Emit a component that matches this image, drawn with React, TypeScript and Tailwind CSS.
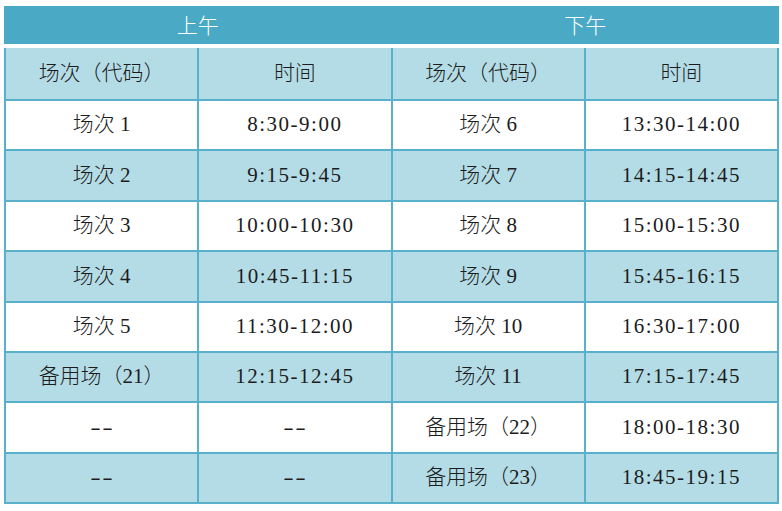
import React from "react";

const rows: [string, string, string, string][] = [
  ["场次 1", "8:30-9:00", "场次 6", "13:30-14:00"],
  ["场次 2", "9:15-9:45", "场次 7", "14:15-14:45"],
  ["场次 3", "10:00-10:30", "场次 8", "15:00-15:30"],
  ["场次 4", "10:45-11:15", "场次 9", "15:45-16:15"],
  ["场次 5", "11:30-12:00", "场次 10", "16:30-17:00"],
  ["备用场（21）", "12:15-12:45", "场次 11", "17:15-17:45"],
  ["--", "--", "备用场（22）", "18:00-18:30"],
  ["--", "--", "备用场（23）", "18:45-19:15"],
];

const font = { fontFamily: '"Liberation Serif", "Noto Sans CJK SC", serif' };

function Cell({ text, bg, time, h }: { text: string; bg: string; time?: boolean; h: string }) {
  const dash = text === "--";
  return (
    <div
      className={`flex items-center justify-center text-[21px] text-[#1c1c1c] font-light ${bg} ${h} ${
        time ? "tracking-[1.5px]" : ""
      }`}
    >
      {dash ? <span className="inline-block tracking-[1px] pl-[1px] scale-x-150">--</span> : text}
    </div>
  );
}

export default function App() {
  return (
    <div className="w-[782px] h-[511px] bg-white pt-[6px] pl-[4px]" style={font}>
      <div className="w-[775px]">
        <div
          className="h-[38px] bg-[#4aa9c5] grid grid-cols-2 text-white text-[21px] font-light"
          style={{ fontFamily: '"Noto Sans CJK SC", sans-serif' }}
        >
          <div className="flex items-center justify-center">上午</div>
          <div className="flex items-center justify-center">下午</div>
        </div>
        <div className="h-[4px] bg-white" />
        <div className="grid grid-cols-4 gap-[2px] bg-[#58b0cb] px-[2px] pb-[2px]">
          <Cell text="场次（代码）" bg="bg-[#b4dce6]" h="h-[51px]" />
          <Cell text="时间" bg="bg-[#b4dce6]" h="h-[51px]" />
          <Cell text="场次（代码）" bg="bg-[#b4dce6]" h="h-[51px]" />
          <Cell text="时间" bg="bg-[#b4dce6]" h="h-[51px]" />
          {rows.map((r, i) => {
            const bg = i % 2 === 0 ? "bg-white" : "bg-[#b4dce6]";
            return (
              <React.Fragment key={i}>
                <Cell text={r[0]} bg={bg} h="h-[48.4px]" />
                <Cell text={r[1]} bg={bg} h="h-[48.4px]" time />
                <Cell text={r[2]} bg={bg} h="h-[48.4px]" />
                <Cell text={r[3]} bg={bg} h="h-[48.4px]" time />
              </React.Fragment>
            );
          })}
        </div>
      </div>
    </div>
  );
}
